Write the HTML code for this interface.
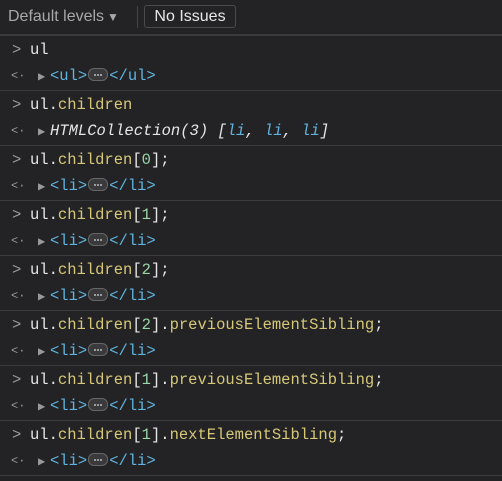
<!DOCTYPE html>
<html><head><style>
body{margin:0;width:502px;height:481px;background:#232325;overflow:hidden;font-family:"Liberation Mono",monospace;}
.tb{height:34px;border-bottom:2px solid #3a3a3c;position:relative;font-family:"Liberation Sans",sans-serif;font-size:16px;}
.dl{position:absolute;left:8px;top:8px;color:#a8a8aa;}
.dl span{font-size:12px;margin-left:3px;}
.vs{position:absolute;left:137px;top:6px;width:1px;height:22px;background:#444;}
.ni{position:absolute;left:144px;top:5px;height:21px;width:90px;border:1px solid #4a4a4c;border-radius:3px;color:#e8e8e8;text-align:center;line-height:21px;}
.g{height:54px;border-bottom:1px solid #3a3a3c;position:relative;font-size:15.5px;}
.p{position:absolute;left:12px;top:5px;color:#999;}
.in{position:absolute;left:30px;top:5px;color:#e6e6e6;white-space:pre;}
.y{color:#d6c878}.n{color:#9ad6a6}
.a{position:absolute;left:11px;top:33px;color:#999;font-size:12px;}
.t{position:absolute;left:38px;top:33px;color:#999;font-size:12px;}
.out{position:absolute;left:50px;top:31px;white-space:pre;color:#5fb3de;}
.d{display:inline-block;width:18px;height:11px;border:1px solid #666;border-radius:6px;background:#3a3a3c;vertical-align:-1px;margin:0 1px;position:relative;}
.d i{position:absolute;top:5px;width:2px;height:2px;background:#bbb;border-radius:1px;}
.it{font-style:italic;color:#e6e6e6}
</style></head><body>
<div class="tb"><div class="dl">Default levels<span>▼</span></div><div class="vs"></div><div class="ni">No Issues</div></div>
<div class="g"><span class="p">&gt;</span><div class="in">ul</div><span class="a">&lt;·</span><span class="t">▶</span><div class="out">&lt;ul&gt;<span class="d"><i style="left:5px"></i><i style="left:8px"></i><i style="left:11px"></i></span>&lt;/ul&gt;</div></div>
<div class="g"><span class="p">&gt;</span><div class="in">ul.<span class="y">children</span></div><span class="a">&lt;·</span><span class="t">▶</span><div class="out"><span class="it">HTMLCollection(3) [<span style="color:#5fb3de">li</span>, <span style="color:#5fb3de">li</span>, <span style="color:#5fb3de">li</span>]</span></div></div>
<div class="g"><span class="p">&gt;</span><div class="in">ul.<span class="y">children</span>[<span class="n">0</span>];</div><span class="a">&lt;·</span><span class="t">▶</span><div class="out">&lt;li&gt;<span class="d"><i style="left:5px"></i><i style="left:8px"></i><i style="left:11px"></i></span>&lt;/li&gt;</div></div>
<div class="g"><span class="p">&gt;</span><div class="in">ul.<span class="y">children</span>[<span class="n">1</span>];</div><span class="a">&lt;·</span><span class="t">▶</span><div class="out">&lt;li&gt;<span class="d"><i style="left:5px"></i><i style="left:8px"></i><i style="left:11px"></i></span>&lt;/li&gt;</div></div>
<div class="g"><span class="p">&gt;</span><div class="in">ul.<span class="y">children</span>[<span class="n">2</span>];</div><span class="a">&lt;·</span><span class="t">▶</span><div class="out">&lt;li&gt;<span class="d"><i style="left:5px"></i><i style="left:8px"></i><i style="left:11px"></i></span>&lt;/li&gt;</div></div>
<div class="g"><span class="p">&gt;</span><div class="in">ul.<span class="y">children</span>[<span class="n">2</span>].<span class="y">previousElementSibling</span>;</div><span class="a">&lt;·</span><span class="t">▶</span><div class="out">&lt;li&gt;<span class="d"><i style="left:5px"></i><i style="left:8px"></i><i style="left:11px"></i></span>&lt;/li&gt;</div></div>
<div class="g"><span class="p">&gt;</span><div class="in">ul.<span class="y">children</span>[<span class="n">1</span>].<span class="y">previousElementSibling</span>;</div><span class="a">&lt;·</span><span class="t">▶</span><div class="out">&lt;li&gt;<span class="d"><i style="left:5px"></i><i style="left:8px"></i><i style="left:11px"></i></span>&lt;/li&gt;</div></div>
<div class="g"><span class="p">&gt;</span><div class="in">ul.<span class="y">children</span>[<span class="n">1</span>].<span class="y">nextElementSibling</span>;</div><span class="a">&lt;·</span><span class="t">▶</span><div class="out">&lt;li&gt;<span class="d"><i style="left:5px"></i><i style="left:8px"></i><i style="left:11px"></i></span>&lt;/li&gt;</div></div>
</body></html>
